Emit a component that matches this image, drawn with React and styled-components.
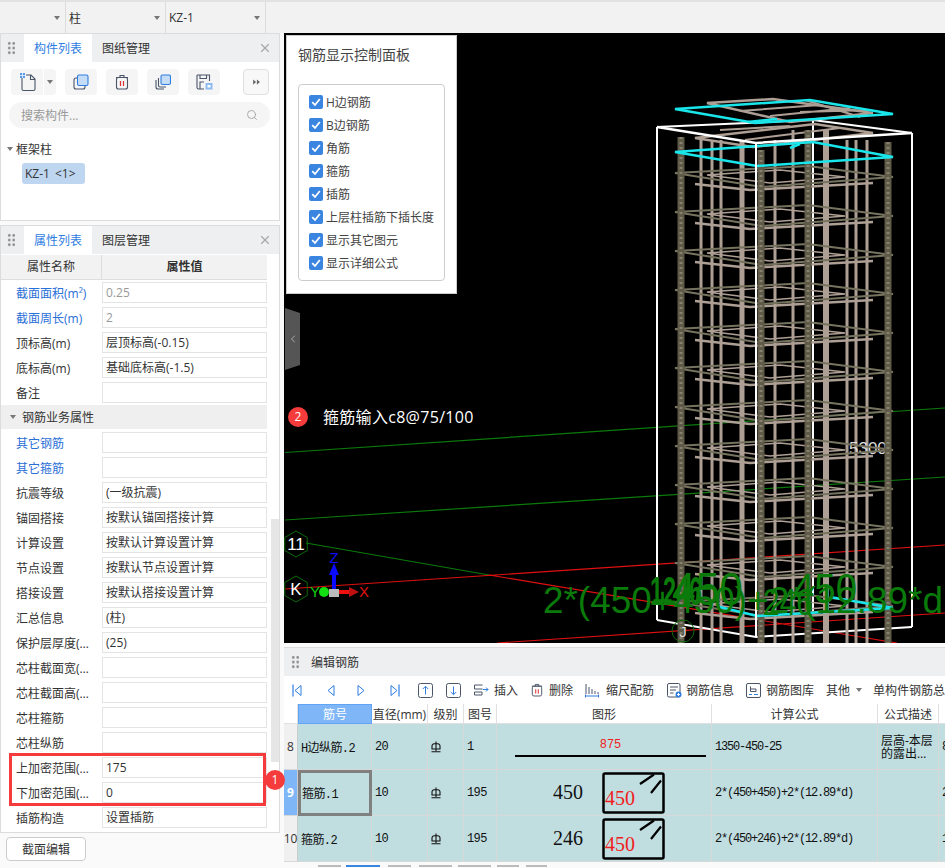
import React from 'react';
import styled, { createGlobalStyle } from 'styled-components';
import { ChevronLeft, Search, X } from 'lucide-react';

const uiFont = `"Open Sans", "Noto Sans CJK SC", sans-serif`;
const cellFont = `"Liberation Mono", "Noto Sans CJK SC", monospace`;

const GlobalStyle = createGlobalStyle`
  html, body {
    margin: 0;
    padding: 0;
    height: 100%;
    overflow: hidden;
    background: #fafafa;
  }
  * { box-sizing: border-box; }
`;

const Page = styled.div`
  width: 945px;
  height: 868px;
  display: grid;
  grid-template-rows: 33px 835px;
  font-family: ${uiFont};
  font-size: 12px;
  color: #333;
`;

const TopBar = styled.div`
  display: flex;
  background: #f2f2f2;
  border-top: 2px solid #e2e2e2;
`;

const TopSelect = styled.div`
  width: ${(p) => p.$w}px;
  display: flex;
  align-items: center;
  justify-content: space-between;
  padding: 0 5px 0 3px;
  border-right: 1px solid #dcdcdc;
`;

const Caret = styled.span`
  width: 0;
  height: 0;
  flex: none;
  border-left: 3px solid transparent;
  border-right: 3px solid transparent;
  border-top: 4px solid #777;
  margin-right: ${(p) => p.$mr || 0}px;
`;

const Body = styled.div`
  display: grid;
  grid-template-columns: 284px 661px;
  min-height: 0;
`;

const LeftColumn = styled.div`
  display: flex;
  flex-direction: column;
  gap: 4px;
  min-height: 0;
`;

const Panel = styled.section`
  position: relative;
  width: 280px;
  height: ${(p) => p.$h}px;
  flex: none;
  background: #fff;
  border: 1px solid #dcdcdc;
`;

const TitleBar = styled.div`
  height: 28px;
  display: flex;
  align-items: stretch;
  background: #eeeff1;
`;

const Grip = styled.div`
  width: 8px;
  height: 14px;
  margin: 7px 9px 0 6px;
  flex: none;
  background-image: radial-gradient(circle, #8a8a8a 1.2px, transparent 1.4px);
  background-size: 4.5px 4.7px;
`;

const Tab = styled.div`
  width: 68px;
  display: flex;
  align-items: center;
  justify-content: center;
  font-size: 12px;
  background: ${(p) => (p.$active ? '#fff' : 'transparent')};
  color: ${(p) => (p.$active ? '#2f7de1' : '#333')};
`;

const CloseBtn = styled.div`
  margin-left: auto;
  margin-right: 7px;
  display: flex;
  align-items: center;
  color: #a8a8a8;
`;

const IconRow = styled.div`
  display: flex;
  padding: 7px 0 0 10px;
`;

const IconBtn = styled.div`
  width: ${(p) => p.$w || 32}px;
  height: 26px;
  margin-left: ${(p) => p.$ml || 0}px;
  display: flex;
  align-items: center;
  justify-content: center;
  background: ${(p) => (p.$outlined ? '#f8f8f8' : '#f5f5f5')};
  border-radius: ${(p) => p.$radius || '4px'};
  border: ${(p) => (p.$outlined ? '1px solid #e0e0e0' : 'none')};
`;

const SearchBox = styled.div`
  width: 261px;
  height: 26px;
  margin: 7px 0 0 8px;
  padding: 0 12px;
  display: flex;
  align-items: center;
  justify-content: space-between;
  background: #f5f5f5;
  border-radius: 13px;
  color: #999;
`;

const TreeGroup = styled.div`
  display: flex;
  align-items: center;
  gap: 3px;
  height: 18px;
  margin: 12px 0 0 6px;
  color: #333;
`;

const TreeItem = styled.div`
  width: 63px;
  height: 21px;
  margin: 5px 0 0 21px;
  padding-left: 3px;
  display: flex;
  align-items: center;
  gap: 5px;
  background: #bed6f0;
  border-radius: 3px;
  white-space: nowrap;
`;

const TreeCount = styled.span`
  font-size: 12px;
`;

const PropsArea = styled.div`
  display: flex;
  height: 578px;
  overflow: hidden;
`;

const PropsTable = styled.div`
  width: 266px;
  flex: none;
`;

const PropsHead = styled.div`
  display: grid;
  grid-template-columns: 101px 165px;
  height: 25px;
  margin-top: 1px;
  background: #f2f2f2;
  border-bottom: 1px solid #ddd;
  text-align: center;
  line-height: 24px;
`;

const HeadCell = styled.div`
  border-right: ${(p) => (p.$last ? 'none' : '1px solid #ddd')};
  font-weight: ${(p) => (p.$last ? 700 : 400)};
`;

const PropRow = styled.div`
  display: grid;
  grid-template-columns: 101px 165px;
  align-items: center;
  height: 25px;
`;

const PropLabel = styled.div`
  padding-left: 15px;
  white-space: nowrap;
  color: ${(p) => (p.$link ? '#2a6fd6' : '#333')};
`;

const PropValue = styled.div`
  height: 21px;
  padding-left: 3px;
  line-height: 19px;
  background: #fff;
  border: 1px solid #e4e4e4;
  white-space: nowrap;
  color: ${(p) => (p.$muted ? '#999' : '#333')};
`;

const GroupRow = styled.div`
  height: 24px;
  margin-bottom: 1px;
  display: flex;
  align-items: center;
  gap: 6px;
  padding-left: 9px;
  background: #efefef;
`;

const ScrollGutter = styled.div`
  flex: 1;
  padding: 265px 0 0 4px;
`;

const ScrollThumb = styled.div`
  height: 243px;
  background: #e6e6e6;
`;

const Highlight = styled.div`
  position: absolute;
  left: 8px;
  top: 527px;
  width: 257px;
  height: 53px;
  border: 3px solid #f53b3b;
  pointer-events: none;
`;

const StepBadge = styled.div`
  position: absolute;
  left: ${(p) => p.$x}px;
  top: ${(p) => p.$y}px;
  width: 20px;
  height: 20px;
  border-radius: 50%;
  background: #f53b3b;
  color: #fff;
  font-size: 12px;
  line-height: 20px;
  text-align: center;
  z-index: 3;
`;

const Footer = styled.div`
  flex: 1;
  padding: 0 0 0 6px;
`;

const PlainButton = styled.button`
  width: 80px;
  height: 24px;
  background: #fff;
  border: 1px solid #ccc;
  border-radius: 4px;
  font: inherit;
  color: #333;
`;

const RightColumn = styled.div`
  display: flex;
  flex-direction: column;
  min-height: 0;
`;

const Viewport = styled.div`
  position: relative;
  height: 610px;
  flex: none;
  background: #000;
  overflow: hidden;
`;

const ViewSvg = styled.svg`
  display: block;
  width: 661px;
  height: 610px;
`;

const ControlPanel = styled.div`
  position: absolute;
  left: 2px;
  top: 2px;
  width: 171px;
  height: 259px;
  padding: 9px 11px;
  background: #fff;
  border: 1px solid #ccc;
`;

const ControlTitle = styled.div`
  font-size: 14px;
  line-height: 20px;
  color: #444;
`;

const CheckGroup = styled.div`
  margin-top: 19px;
  height: 197px;
  padding: 10px 10px;
  display: flex;
  flex-direction: column;
  gap: 9px;
  border: 1px solid #ccc;
  border-radius: 4px;
`;

const CheckRow = styled.div`
  display: flex;
  align-items: center;
  gap: 3px;
  height: 14px;
  white-space: nowrap;
  color: #444;
`;

const CheckBox = styled.span`
  width: 14px;
  height: 14px;
  display: flex;
  align-items: center;
  justify-content: center;
  flex: none;
  background: #3a85e0;
  border-radius: 2px;
`;

const Handle = styled.div`
  position: absolute;
  left: 1px;
  top: 275px;
  width: 15px;
  height: 62px;
  display: flex;
  align-items: center;
  justify-content: center;
  background: #555;
  color: #aaa;
  clip-path: polygon(0 0, 100% 8%, 100% 92%, 0 100%);
`;

const StepNote = styled.div`
  position: absolute;
  left: 39px;
  top: 373px;
  color: #fff;
  font-size: 16px;
  letter-spacing: 0.3px;
  line-height: 22px;
  white-space: nowrap;
`;

const Editor = styled.section`
  margin-top: 4px;
  flex: 1;
  display: flex;
  flex-direction: column;
  min-height: 0;
  border-top: 1px solid #dcdcdc;
  overflow: hidden;
`;

const EditorTitle = styled.div`
  height: 28px;
  flex: none;
  display: flex;
  align-items: center;
  background: #eeeff1;
`;

const EditorGrip = styled(Grip)`
  margin: 0 12px 0 7px;
`;

const EditorBar = styled.div`
  height: 28px;
  flex: none;
  display: flex;
  align-items: center;
  background: #fff;
  white-space: nowrap;
`;

const BarIcon = styled.span`
  display: flex;
  flex: none;
  margin-left: ${(p) => p.$ml}px;
  margin-right: ${(p) => p.$mr || 0}px;
`;

const BarLabel = styled.span`
  flex: none;
  margin-left: ${(p) => p.$ml || 0}px;
`;

const RebarGrid = styled.div`
  flex: none;
  display: grid;
  grid-template-columns: 14px 74px 56px 36px 33px 215px 166px 61px 20px;
  grid-template-rows: 20px 46px 46px 46px;
  background: #d8d8d8;
`;

const HeaderCell = styled.div`
  display: flex;
  align-items: center;
  justify-content: center;
  white-space: nowrap;
  background: ${(p) => (p.$active ? '#7eb6f8' : '#fff')};
  color: ${(p) => (p.$active ? '#fff' : '#333')};
  border-right: 1px solid #e0e0e0;
  border-bottom: 1px solid #e0e0e0;
  ${(p) => p.$active && 'border: 1px solid #5fa4f5;'}
`;

const RowNo = styled.div`
  display: flex;
  align-items: center;
  justify-content: center;
  background: ${(p) => (p.$active ? '#7eb6f8' : '#f0f0f0')};
  color: ${(p) => (p.$active ? '#fff' : '#333')};
  font-weight: ${(p) => (p.$active ? 700 : 400)};
  border-bottom: 1px solid #d8d8d8;
  border-right: 1px solid #ccc;
`;

const Cell = styled.div`
  display: flex;
  align-items: center;
  padding-left: 3px;
  overflow: hidden;
  white-space: nowrap;
  background: #c0dde0;
  color: #111;
  font-family: ${cellFont};
  font-size: 12px;
  letter-spacing: ${(p) => (p.$tight ? '-1.2px' : '-0.6px')};
  border-right: 1px solid #d8d8d8;
  border-bottom: 1px solid #d8d8d8;
  ${(p) => p.$selected && 'border: 3px solid #808080; padding-left: 1px;'}
`;

const WrapCell = styled(Cell)`
  white-space: normal;
  line-height: 13px;
  padding: 0 2px 0 3px;
  letter-spacing: 0;
  font-family: ${uiFont};
`;

const ShapeCell = styled(Cell)`
  padding-left: 56px;
  gap: 19px;
  letter-spacing: 0;
`;

const LineShape = styled(Cell)`
  flex-direction: column;
  justify-content: flex-start;
  padding: 14px 5px 0 18px;
  align-items: stretch;
  letter-spacing: 0;
`;

const ShapeLength = styled.div`
  height: 17px;
  text-align: center;
  color: #f02020;
  font-size: 12px;
`;

const ShapeLine = styled.div`
  height: 2px;
  background: #000;
`;

const SerifNum = styled.span`
  width: 30px;
  font-family: "Liberation Serif", serif;
  font-size: 20px;
`;

const BottomTabs = styled.div`
  flex: 1;
  display: flex;
  padding-left: 34px;
  padding-top: 3px;
  background: #fafafa;
`;

const BottomTab = styled.div`
  width: ${(p) => p.$w}px;
  height: 2px;
  margin-right: ${(p) => p.$mr}px;
  background: ${(p) => (p.$active ? '#3a85e0' : '#bbb')};
`;

/* icons */
const NewDocIcon = () => (
  <svg width="17" height="20" viewBox="0 0 17 20" fill="none">
    <path d="M3 4v13a1.5 1.5 0 0 0 1.500 1.500h10a1.500 1.500 0 0 0 1.500-1.500V7l-4-4H7" stroke="#4a5568" strokeWidth="1.100" />
    <path d="M11.500 3v4.500h4.500" stroke="#4a5568" strokeWidth="1.100" />
    <path d="M1 1h5v5H1z" fill="#5b9be8" />
    <path d="M1 3.500h5M3.500 1v5" stroke="#fff" strokeWidth=".7" />
  </svg>
);

const CopyIcon = () => (
  <svg width="16" height="16" viewBox="0 0 16 16" fill="none">
    <rect x="1" y="4" width="11" height="11" rx="2" stroke="#4a5568" strokeWidth="1.100" />
    <rect x="4.500" y="1" width="10.500" height="10.500" rx="1.500" fill="#c5dcf7" stroke="#2f7de1" strokeWidth="1.100" />
  </svg>
);

const TrashIcon = ({ size = 14 }) => (
  <svg width={size} height={size + 2} viewBox="0 0 14 16" fill="none">
    <path d="M1 3.500h12M5 3.500V1.500h4v2" stroke="#4a5568" strokeWidth="1.100" />
    <rect x="1.500" y="3.500" width="11" height="11.500" rx="2" stroke="#4a5568" strokeWidth="1.100" />
    <path d="M5.500 7v5M8.500 7v5" stroke="#d33" strokeWidth="1.200" />
  </svg>
);

const StackIcon = () => (
  <svg width="16" height="16" viewBox="0 0 16 16" fill="none">
    <path d="M1 6v7a2 2 0 0 0 2 2h6" stroke="#4a5568" strokeWidth="1.100" />
    <path d="M3.500 4v7.500a1.500 1.500 0 0 0 1.500 1.500h6" stroke="#4a5568" strokeWidth="1.100" />
    <rect x="6" y="1" width="9.500" height="9.500" rx="1.500" fill="#c5dcf7" stroke="#2f7de1" strokeWidth="1.100" />
  </svg>
);

const SaveAsIcon = () => (
  <svg width="17" height="16" viewBox="0 0 17 16" fill="none">
    <path d="M1 1h12.500v6M8 15H2.500A1.500 1.500 0 0 1 1 13.500V1" stroke="#4a5568" strokeWidth="1.100" />
    <path d="M4 15V8h4M4 1v3.500h6.500V1" stroke="#4a5568" strokeWidth="1.100" />
    <rect x="9.500" y="9" width="7" height="6.500" fill="#8fbcf0" />
    <rect x="11.500" y="11" width="3" height="2.500" fill="#fff" />
  </svg>
);

const FastForward = () => (
  <svg width="7" height="6" viewBox="0 0 9 8">
    <path d="M0 .5L4 4 0 7.500zM5 .5L9 4 5 7.500z" fill="#666" />
  </svg>
);

const Tick = () => (
  <svg width="10" height="10" viewBox="0 0 10 10" fill="none">
    <path d="M1.200 5.200L4 8l4.800-6" stroke="#fff" strokeWidth="1.800" />
  </svg>
);

const blue = '#2f7de1';

const NavIcon = ({ dir, bar }) => (
  <svg width="12" height="13" viewBox="0 0 12 13" fill="none">
    {dir === 'left' ? <path d="M9 1.500L3 6.500l6 5z" stroke={blue} /> : <path d="M3 1.500l6 5-6 5z" stroke={blue} />}
    {bar && <path d={dir === 'left' ? 'M1 .5v12' : 'M11 .5v12'} stroke={blue} strokeWidth="1.200" />}
  </svg>
);

const MoveIcon = ({ up }) => (
  <svg width="15" height="15" viewBox="0 0 15 15" fill="none">
    <rect x=".5" y=".5" width="14" height="14" rx="2" stroke="#4a5568" />
    <path d={up ? 'M7.500 11.500v-8M4.800 6l2.700-2.700L10.200 6' : 'M7.500 3.500v8M4.800 9l2.700 2.700L10.200 9'} stroke={blue} />
  </svg>
);

const InsertIcon = () => (
  <svg width="15" height="12" viewBox="0 0 15 12" fill="none">
    <path d="M8.500 1H.5v4h8M.5 8h7.500v3H.5z" stroke="#4a5568" />
    <path d="M9 5.500h5M12 3.500l2 2-2 2" stroke={blue} />
  </svg>
);

const ScaleIcon = () => (
  <svg width="14" height="15" viewBox="0 0 14 15" fill="none">
    <path d="M1 1v10M4 4v7M7 6v5M10 8v3M13 9v2" stroke="#4a5568" />
    <path d="M.5 13h13M.5 11.500v3M13.500 11.500v3" stroke={blue} />
  </svg>
);

const InfoIcon = () => (
  <svg width="15" height="15" viewBox="0 0 15 15" fill="none">
    <rect x=".5" y=".5" width="12.500" height="13.500" rx="1.500" stroke="#4a5568" />
    <path d="M3 4h8M3 7h6M3 10h3.500" stroke="#4a5568" />
    <circle cx="11.500" cy="11.500" r="3" fill={blue} />
    <path d="M10 11.500h3M11.500 10v3" stroke="#fff" />
  </svg>
);

const LibraryIcon = () => (
  <svg width="15" height="15" viewBox="0 0 15 15" fill="none">
    <rect x=".5" y=".5" width="14" height="14" rx="1.500" stroke="#4a5568" />
    <path d="M4.500 3.500v5h5.500V6H4.500" stroke="#4a5568" />
    <path d="M3 11.500h3M8 11.500h4" stroke={blue} />
  </svg>
);

const GradeIcon = () => (
  <svg width="10" height="12" viewBox="0 0 10 12" fill="none">
    <path d="M5 .5v9.500M1 8V5a4 2.500 0 0 1 8 0v3zM.5 10.800h9" stroke="#111" strokeWidth="1.100" />
  </svg>
);

const Stirrup = () => (
  <svg width="63" height="42" viewBox="0 0 63 42" fill="none">
    <rect x="1.500" y="1.500" width="60" height="39" rx="1.500" stroke="#000" strokeWidth="2.500" />
    <path d="M38 12L52 2.500M49 21l10-12.500" stroke="#000" strokeWidth="2.200" />
    <text x="3" y="33" fill="#f02020" fontFamily='"Liberation Serif", serif' fontSize="20">450</text>
  </svg>
);

/* 3d view */
const postXs = [681, 808, 888, 761];
const postTops = [137, 130, 142, 150];
const lightBars = [[701, 3], [712, 3], [721, 3], [742, 5], [775, 3], [793, 3], [826, 6], [847, 3], [856, 3], [867, 3]];
const levels = Array.from({ length: 12 }, (_, i) => 187 + i * 39);

const Hex = ({ x, y, r, label, fill = '#fff' }) => {
  const pts = Array.from({ length: 6 }, (_, i) => {
    const a = (Math.PI / 3) * i + Math.PI / 2;
    return `${x + r * Math.cos(a)},${y + r * Math.sin(a)}`;
  }).join(' ');
  return (
    <g>
      <polygon points={pts} fill="none" stroke="#0b6b0b" />
      <text x={x} y={y + 6} textAnchor="middle" fill={fill} fontSize="17" fontFamily='"Liberation Sans", sans-serif'>{label}</text>
    </g>
  );
};

const Scene = () => (
  <ViewSvg viewBox="284 33 661 610">
    <g strokeWidth="1.200" fill="none">
      <path d="M285 452.500L945 408M285 520L945 477" stroke="#0a7a0a" />
      <path d="M306 543L489 575" stroke="#0a7a0a" />
      <path d="M285 589L945 545M489 575L897 643M497 643L945 613" stroke="#e01010" />
    </g>
    <g stroke="#fff" strokeWidth="2" fill="none">
      <path d="M657 127L813 120L912 133M657 127V620M912 133V627M813 120V612" />
      <path d="M657 620L756 637L912 627" />
    </g>
    {lightBars.map(([x, w]) => (
      <line key={x} x1={x} x2={x} y1={x > 780 && x < 830 ? 130 : 140} y2="643" stroke="#ae9f95" strokeWidth={w} />
    ))}
    <g fill="none" stroke="#ae9f95" strokeWidth="2.500">
      <path d="M707 103L773 99L873 113L790 122Z" />
      <path d="M740 111L820 105M770 116L850 108M805 100L860 117M800 112L870 110" strokeWidth="2" />
      <path d="M695 138L753 147L873 133L815 124Z" />
      <path d="M720 130L790 126M745 140L840 128" strokeWidth="2" />
      {levels.map((y) => (
        <g key={y}>
          <path d={`M695 ${y - 3}L750 ${y + 3}L873 ${y - 4}`} strokeWidth="2.500" />
          <path d={`M707 ${y - 12}L770 ${y - 4}L845 ${y - 10}L780 ${y - 17}Z`} strokeWidth="1.500" />
        </g>
      ))}
    </g>
    <text x="849" y="454" fill="#ddd" fontSize="17" fontFamily='"Liberation Sans", sans-serif'>5300</text>
    <g fill="none" stroke="#76735e" strokeWidth="2">
      {levels.map((y) => (
        <path key={y} d={`M675 ${y - 14}L762 ${y}L893 ${y - 10}L808 ${y - 21}Z`} />
      ))}
    </g>
    {postXs.map((x, i) => (
      <g key={x}>
        <line x1={x} x2={x} y1={postTops[i]} y2="643" stroke="#605b49" strokeWidth="7" />
        <line x1={x} x2={x} y1={postTops[i]} y2="643" stroke="#85816f" strokeWidth="3" strokeDasharray="2 3" />
      </g>
    ))}
    <g fill="none" stroke="#19e6ea" strokeWidth="2.500">
      <path d="M675 109L755 123L893 114L810 100Z" />
      <path d="M675 152L757 166L893 157L813 142Z" />
      <path d="M748 122L777 119M790 148L800 144" />
      <path d="M720 607L757 616L893 608L830 597" />
    </g>
    <g stroke="#fff" strokeWidth="2.500" fill="none">
      <path d="M657 127L756 143L912 133" />
      <path d="M756 143V637" strokeWidth="2" />
    </g>
    <Hex x={296} y={544} r={13} label="11" />
    <Hex x={296} y={589} r={13} label="K" />
    <circle cx="683" cy="631" r="11" fill="none" stroke="#0b6b0b" />
    <text x="683" y="637" textAnchor="middle" fill="#ddd" fontSize="15" fontFamily='"Liberation Sans", sans-serif'>J</text>
    <g fontFamily='"Liberation Sans", sans-serif' fontSize="15">
      <text x="334" y="563" textAnchor="middle" fill="#0a0aff">Z</text>
      <text x="315" y="597" textAnchor="middle" fill="#12d012">Y</text>
      <text x="364" y="597" textAnchor="middle" fill="#e01010">X</text>
    </g>
    <line x1="334" x2="334" y1="575" y2="590" stroke="#0a0aff" strokeWidth="4" />
    <path d="M334 563l-5 12h10z" fill="#0a0aff" />
    <line x1="339" x2="352" y1="592" y2="592" stroke="#f01010" strokeWidth="4" />
    <path d="M359 592l-10-5v10z" fill="#c01010" />
    <circle cx="324" cy="592" r="5" fill="#12e012" />
    <rect x="329" y="589" width="10" height="8" fill="#bbb" />
    <g fill="#0a7a0a" fontFamily='"Liberation Sans", sans-serif'>
      <text x="543" y="613" fontSize="37" textLength="400" lengthAdjust="spacingAndGlyphs">2*(450+450)+2*(12.89*d</text>
      <text x="650" y="605" fontSize="40" fontWeight="700" textLength="52" lengthAdjust="spacingAndGlyphs">1246</text>
      <text x="672" y="605" fontSize="46" textLength="71" lengthAdjust="spacingAndGlyphs">450</text>
      <text x="763" y="615" fontSize="37" textLength="50" lengthAdjust="spacingAndGlyphs">246</text>
      <text x="793" y="603" fontSize="42" textLength="64" lengthAdjust="spacingAndGlyphs">450</text>
    </g>
  </ViewSvg>
);

const props1 = [
  ['截面面积(m²)', '0.25', true, true],
  ['截面周长(m)', '2', true, true],
  ['顶标高(m)', '层顶标高(-0.15)'],
  ['底标高(m)', '基础底标高(-1.5)'],
  ['备注', ''],
];

const props2 = [
  ['其它钢筋', '', true],
  ['其它箍筋', '', true],
  ['抗震等级', '(一级抗震)'],
  ['锚固搭接', '按默认锚固搭接计算'],
  ['计算设置', '按默认计算设置计算'],
  ['节点设置', '按默认节点设置计算'],
  ['搭接设置', '按默认搭接设置计算'],
  ['汇总信息', '(柱)'],
  ['保护层厚度(…', '(25)'],
  ['芯柱截面宽(…', ''],
  ['芯柱截面高(…', ''],
  ['芯柱箍筋', ''],
  ['芯柱纵筋', ''],
  ['上加密范围(…', '175'],
  ['下加密范围(…', '0'],
  ['插筋构造', '设置插筋'],
  ['', ''],
];

const checks = ['H边钢筋', 'B边钢筋', '角筋', '箍筋', '插筋', '上层柱插筋下插长度', '显示其它图元', '显示详细公式'];

const bottomTabs = [[23, 5], [34, 8, true], [23, 8], [33, 6], [33, 6], [22, 7], [21, 0]];

const Prop = ({ row }) => (
  <PropRow>
    <PropLabel $link={row[2]}>{row[0]}</PropLabel>
    <PropValue $muted={row[3]}>{row[1]}</PropValue>
  </PropRow>
);

const App = () => (
  <>
    <GlobalStyle />
    <Page>
      <TopBar>
        <TopSelect $w={66}><span /><Caret /></TopSelect>
        <TopSelect $w={100}>柱<Caret /></TopSelect>
        <TopSelect $w={100}>KZ-1<Caret /></TopSelect>
      </TopBar>
      <Body>
        <LeftColumn>
          <Panel $h={188}>
            <TitleBar>
              <Grip />
              <Tab $active>构件列表</Tab>
              <Tab>图纸管理</Tab>
              <CloseBtn><X size={14} /></CloseBtn>
            </TitleBar>
            <IconRow>
              <IconBtn $radius="4px 0 0 4px"><NewDocIcon /></IconBtn>
              <IconBtn $w={12} $ml={1} $radius="0 4px 4px 0"><Caret /></IconBtn>
              <IconBtn $ml={9}><CopyIcon /></IconBtn>
              <IconBtn $ml={9}><TrashIcon /></IconBtn>
              <IconBtn $ml={9}><StackIcon /></IconBtn>
              <IconBtn $ml={9}><SaveAsIcon /></IconBtn>
              <IconBtn $w={26} $ml={23} $outlined><FastForward /></IconBtn>
            </IconRow>
            <SearchBox>
              搜索构件...
              <Search size={12} color="#aaa" />
            </SearchBox>
            <TreeGroup><Caret />框架柱</TreeGroup>
            <TreeItem>KZ-1 <TreeCount>&lt;1&gt;</TreeCount></TreeItem>
          </Panel>
          <Panel $h={608}>
            <TitleBar>
              <Grip />
              <Tab $active>属性列表</Tab>
              <Tab>图层管理</Tab>
              <CloseBtn><X size={14} /></CloseBtn>
            </TitleBar>
            <PropsArea>
              <PropsTable>
                <PropsHead>
                  <HeadCell>属性名称</HeadCell>
                  <HeadCell $last>属性值</HeadCell>
                </PropsHead>
                {props1.map((row) => <Prop key={row[0]} row={row} />)}
                <GroupRow><Caret />钢筋业务属性</GroupRow>
                {props2.map((row, i) => <Prop key={i} row={row} />)}
              </PropsTable>
              <ScrollGutter><ScrollThumb /></ScrollGutter>
            </PropsArea>
            <Highlight />
            <StepBadge $x={264} $y={544}>1</StepBadge>
          </Panel>
          <Footer><PlainButton>截面编辑</PlainButton></Footer>
        </LeftColumn>
        <RightColumn>
          <Viewport>
            <Scene />
            <ControlPanel>
              <ControlTitle>钢筋显示控制面板</ControlTitle>
              <CheckGroup>
                {checks.map((c) => (
                  <CheckRow key={c}><CheckBox><Tick /></CheckBox>{c}</CheckRow>
                ))}
              </CheckGroup>
            </ControlPanel>
            <Handle><ChevronLeft size={12} /></Handle>
            <StepBadge $x={4} $y={374}>2</StepBadge>
            <StepNote>箍筋输入c8@75/100</StepNote>
          </Viewport>
          <Editor>
            <EditorTitle><EditorGrip />编辑钢筋</EditorTitle>
            <EditorBar>
              <BarIcon $ml={8}><NavIcon dir="left" bar /></BarIcon>
              <BarIcon $ml={21}><NavIcon dir="left" /></BarIcon>
              <BarIcon $ml={18}><NavIcon dir="right" /></BarIcon>
              <BarIcon $ml={21}><NavIcon dir="right" bar /></BarIcon>
              <BarIcon $ml={18}><MoveIcon up /></BarIcon>
              <BarIcon $ml={13}><MoveIcon /></BarIcon>
              <BarIcon $ml={13} $mr={5}><InsertIcon /></BarIcon>
              <BarLabel>插入</BarLabel>
              <BarIcon $ml={13} $mr={6}><TrashIcon size={12} /></BarIcon>
              <BarLabel>删除</BarLabel>
              <BarIcon $ml={12} $mr={7}><ScaleIcon /></BarIcon>
              <BarLabel>缩尺配筋</BarLabel>
              <BarIcon $ml={13} $mr={4}><InfoIcon /></BarIcon>
              <BarLabel>钢筋信息</BarLabel>
              <BarIcon $ml={12} $mr={5}><LibraryIcon /></BarIcon>
              <BarLabel>钢筋图库</BarLabel>
              <BarLabel $ml={12}>其他</BarLabel>
              <BarIcon $ml={6}><Caret /></BarIcon>
              <BarLabel $ml={11}>单构件钢筋总</BarLabel>
            </EditorBar>
            <RebarGrid>
              <HeaderCell />
              <HeaderCell $active>筋号</HeaderCell>
              <HeaderCell>直径(mm)</HeaderCell>
              <HeaderCell>级别</HeaderCell>
              <HeaderCell>图号</HeaderCell>
              <HeaderCell>图形</HeaderCell>
              <HeaderCell>计算公式</HeaderCell>
              <HeaderCell>公式描述</HeaderCell>
              <HeaderCell />

              <RowNo>8</RowNo>
              <Cell>H边纵筋.2</Cell>
              <Cell>20</Cell>
              <Cell><GradeIcon /></Cell>
              <Cell>1</Cell>
              <LineShape>
                <ShapeLength>875</ShapeLength>
                <ShapeLine />
              </LineShape>
              <Cell $tight>1350-450-25</Cell>
              <WrapCell>层高-本层的露出…</WrapCell>
              <Cell>8</Cell>

              <RowNo $active>9</RowNo>
              <Cell $selected>箍筋.1</Cell>
              <Cell>10</Cell>
              <Cell><GradeIcon /></Cell>
              <Cell>195</Cell>
              <ShapeCell><SerifNum>450</SerifNum><Stirrup /></ShapeCell>
              <Cell $tight>2*(450+450)+2*(12.89*d)</Cell>
              <Cell />
              <Cell>2</Cell>

              <RowNo>10</RowNo>
              <Cell>箍筋.2</Cell>
              <Cell>10</Cell>
              <Cell><GradeIcon /></Cell>
              <Cell>195</Cell>
              <ShapeCell><SerifNum>246</SerifNum><Stirrup /></ShapeCell>
              <Cell $tight>2*(450+246)+2*(12.89*d)</Cell>
              <Cell />
              <Cell>1</Cell>
            </RebarGrid>
            <BottomTabs>
              {bottomTabs.map(([w, mr, active], i) => (
                <BottomTab key={i} $w={w} $mr={mr} $active={active} />
              ))}
            </BottomTabs>
          </Editor>
        </RightColumn>
      </Body>
    </Page>
  </>
);

export default App;
